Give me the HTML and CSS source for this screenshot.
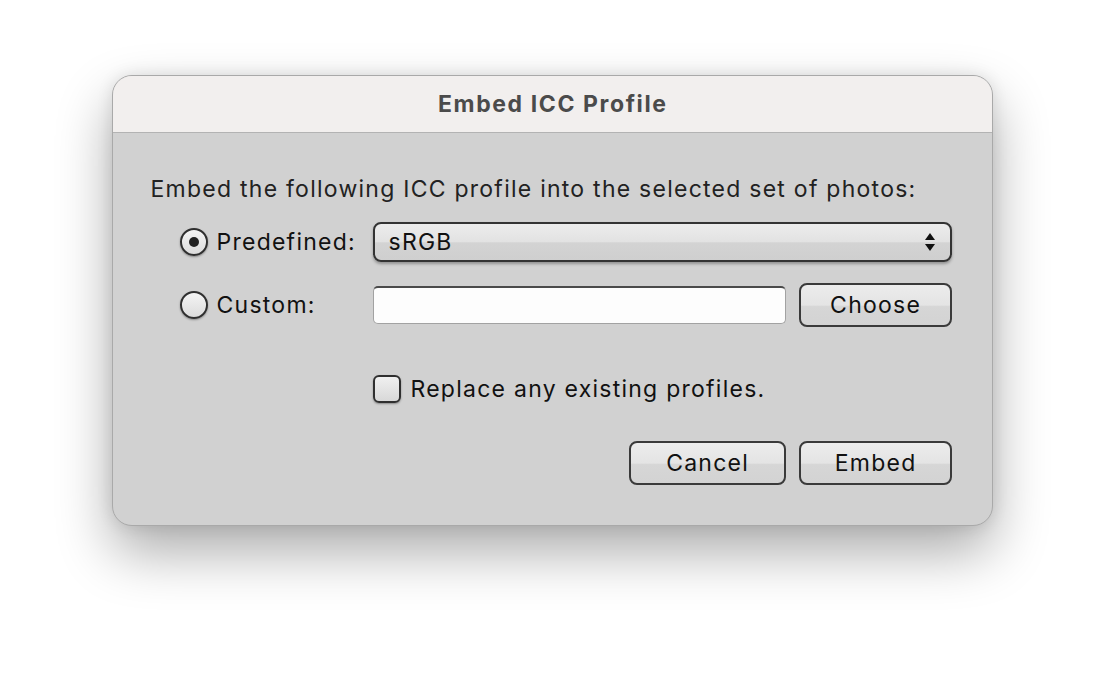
FILE: index.html
```html
<!DOCTYPE html>
<html>
<head>
<meta charset="utf-8">
<link rel="stylesheet" href="styles.css">
</head>
<body>
<div class="stage">
  <div class="window">
    <div class="titlebar">Embed ICC Profile</div>
    <div class="content">
      <div class="intro">Embed the following ICC profile into the selected set of photos:</div>
      <div class="row row-pre">
        <div class="labelcol">
          <span class="radio checked"><span class="dot"></span></span>
          <span class="label">Predefined:</span>
        </div>
        <div class="popup">
          <span class="popup-text">sRGB</span>
          <svg class="arrows" width="12" height="22" viewBox="0 0 12 22"><path d="M6 2 L11 9 L1 9 Z" fill="#111"/><path d="M1 13 L11 13 L6 20 Z" fill="#111"/></svg>
        </div>
      </div>
      <div class="row row-custom">
        <div class="labelcol">
          <span class="radio"></span>
          <span class="label">Custom:</span>
        </div>
        <div class="field"></div>
        <div class="button choose">Choose</div>
      </div>
      <div class="row row-check">
        <span class="checkbox"></span>
        <span class="label">Replace any existing profiles.</span>
      </div>
      <div class="row row-buttons">
        <div class="button cancel">Cancel</div>
        <div class="button embed">Embed</div>
      </div>
    </div>
  </div>
</div>
</body>
</html>
```
FILE: styles.css
```css
html, body {
  margin: 0;
  padding: 0;
  background: #ffffff;
}
body {
  font-family: "Inter", "Liberation Sans", sans-serif;
  color: #111;
}
.stage {
  width: 1104px;
  height: 674px;
  display: flex;
  justify-content: center;
  padding-top: 75px;
  box-sizing: border-box;
}
.window {
  width: 881px;
  height: 451px;
  box-sizing: border-box;
  border: 1px solid #a9a9a9;
  border-radius: 20px;
  background: #d1d1d1;
  box-shadow: 0 26px 55px rgba(0,0,0,0.33), 0 0 16px rgba(0,0,0,0.10);
  overflow: hidden;
  display: flex;
  flex-direction: column;
}
.titlebar {
  height: 56px;
  flex: none;
  background: #f2efee;
  border-bottom: 1px solid #b3b3b3;
  display: flex;
  align-items: center;
  justify-content: center;
  font-weight: 700;
  font-size: 23px;
  letter-spacing: 1.6px;
  text-indent: 1.6px;
  color: #4b4b4b;
}
.content {
  padding: 43px 40px 0 38px;
  display: flex;
  flex-direction: column;
}
.intro {
  font-size: 23px;
  letter-spacing: 1.25px;
  line-height: 26px;
  color: #222;
}
.row {
  display: flex;
  align-items: center;
}
.row-pre {
  margin-top: 20px;
  height: 40px;
}
.row-custom {
  margin-top: 21px;
  height: 44px;
}
.row-check {
  margin-top: 48px;
  height: 28px;
  padding-left: 222px;
}
.row-buttons {
  margin-top: 38px;
  height: 44px;
  justify-content: flex-end;
}
.labelcol {
  width: 193px;
  margin-left: 29px;
  display: flex;
  align-items: center;
  flex: none;
}
.label {
  font-size: 23px;
  letter-spacing: 1.25px;
  color: #111;
}
.radio {
  width: 28px;
  height: 28px;
  box-sizing: border-box;
  border-radius: 50%;
  border: 2.5px solid #2f2f2f;
  background: linear-gradient(#f4f4f4, #dcdcdc);
  box-shadow: 0 1px 2px rgba(0,0,0,0.35);
  margin-right: 9px;
  display: flex;
  align-items: center;
  justify-content: center;
  flex: none;
}
.radio .dot {
  width: 10px;
  height: 10px;
  border-radius: 50%;
  background: #222;
}
.popup {
  width: 579px;
  height: 40px;
  box-sizing: border-box;
  border: 2px solid #333;
  border-radius: 8px;
  background: linear-gradient(#ececec 0%, #e2e2e2 50%, #d3d3d3 52%, #cfcfcf 100%);
  box-shadow: 0 2px 3px rgba(0,0,0,0.3);
  display: flex;
  align-items: center;
  justify-content: space-between;
  padding: 0 14px 0 14px;
}
.popup-text {
  font-size: 23px;
  letter-spacing: 1.25px;
  color: #111;
}
.arrows {
  display: block;
}
.field {
  width: 413px;
  height: 38px;
  box-sizing: border-box;
  background: #fdfdfd;
  border: 1.5px solid #a2a2a2;
  border-top: 2px solid #4a4a4a;
  border-radius: 5px;
  flex: none;
}
.button {
  height: 44px;
  box-sizing: border-box;
  border: 2px solid #3a3a3a;
  border-radius: 8px;
  background: linear-gradient(#ececec 0%, #e4e4e4 50%, #d6d6d6 54%, #d3d3d3 100%);
  display: flex;
  align-items: center;
  justify-content: center;
  font-size: 23px;
  letter-spacing: 1.25px;
  text-indent: 1.25px;
  color: #111;
  flex: none;
}
.choose {
  width: 153px;
  margin-left: 13px;
}
.cancel {
  width: 157px;
}
.embed {
  width: 153px;
  margin-left: 13px;
}
.checkbox {
  width: 28px;
  height: 28px;
  box-sizing: border-box;
  border: 2.5px solid #2f2f2f;
  border-radius: 6px;
  background: linear-gradient(#f0f0f0, #d8d8d8);
  box-shadow: 0 1px 2px rgba(0,0,0,0.35);
  margin-right: 10px;
  flex: none;
}
```
